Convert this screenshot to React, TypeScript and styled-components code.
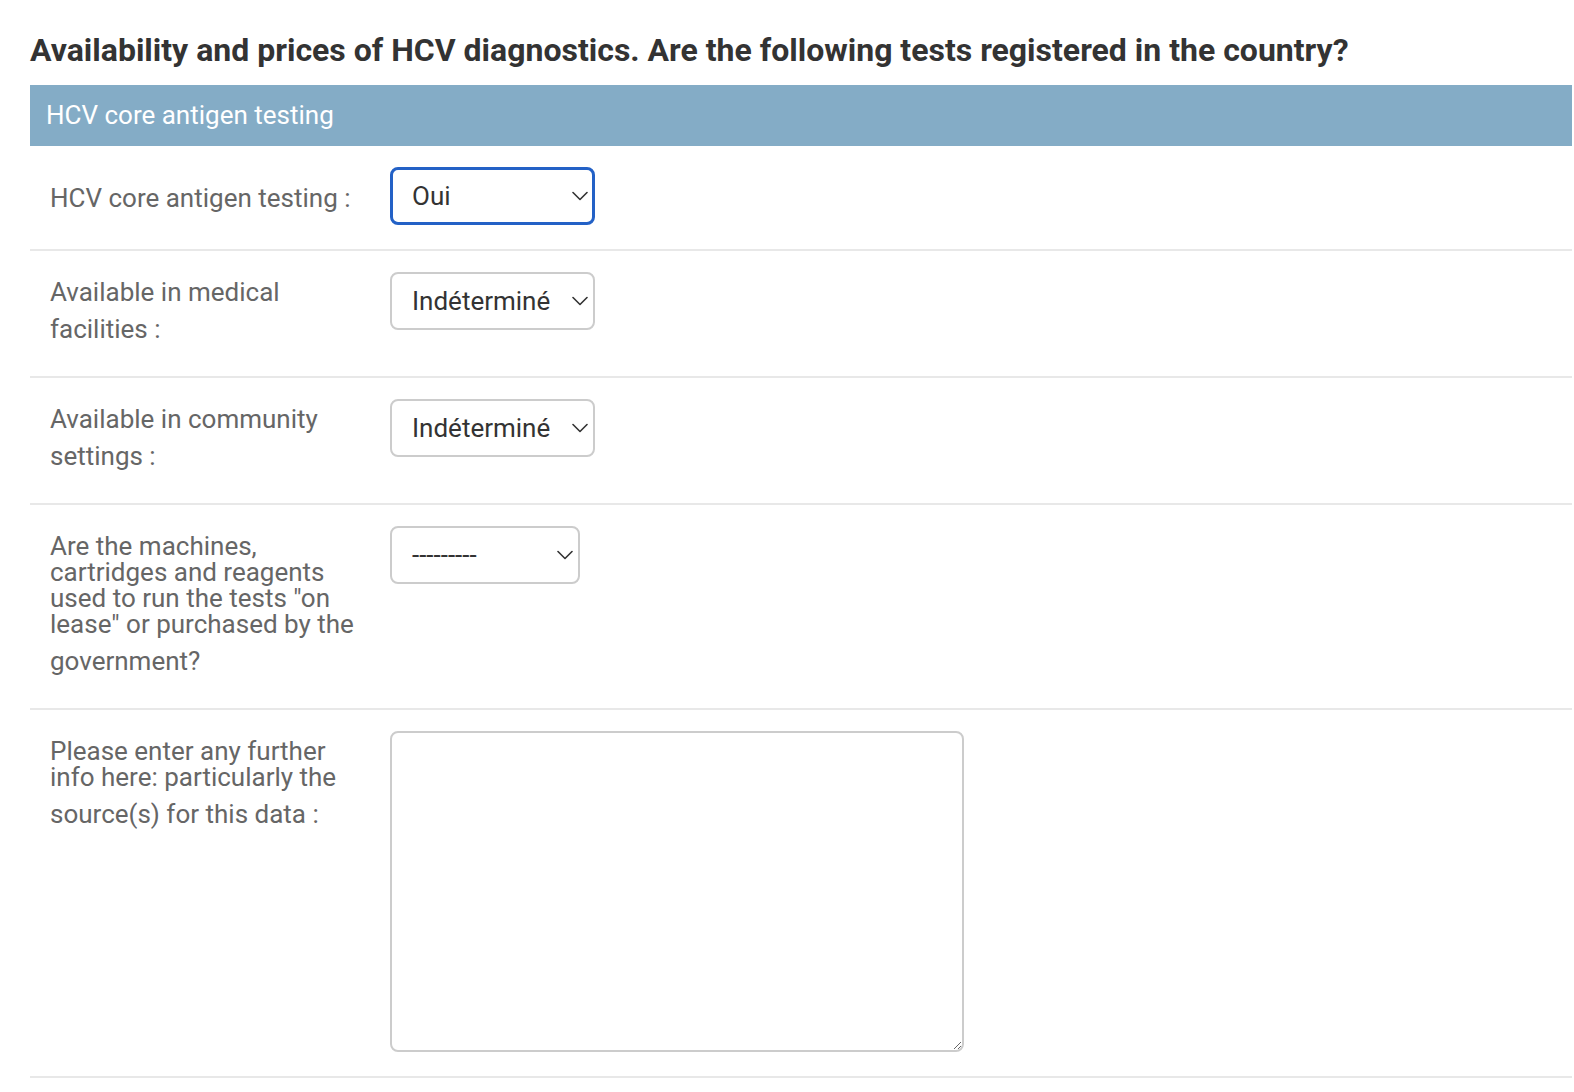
import React from "react";
import styled, { createGlobalStyle, css } from "styled-components";

const Global = createGlobalStyle`
  html, body { margin: 0; padding: 0; background: #fff; }
  body { font-family: Roboto, "Liberation Sans", sans-serif; color: #333; }
  * { box-sizing: border-box; }
`;

const Page = styled.div`
  padding: 0 2px 0 30px;
`;

const Title = styled.h1`
  margin: 0 0 15px;
  padding-top: 30px;
  font-size: 32px;
  line-height: 40px;
  font-weight: 700;
  color: #333;
`;

const Fieldset = styled.fieldset`
  margin: 0;
  padding: 0;
  border: 0;
  min-width: 0;
`;

const Legend = styled.h2`
  margin: 0;
  padding: 16px;
  font-size: 26px;
  line-height: 29px;
  font-weight: 400;
  color: #fff;
  background: #84acc6;
`;

const Row = styled.div`
  display: flex;
  align-items: flex-start;
  padding: 20px 20px 19px;
  border-bottom: 2px solid #e8e8e8;
`;

const Label = styled.label`
  flex: 0 0 340px;
  width: 340px;
  padding: 8px 20px 0 0;
  font-size: 26px;
  line-height: 26px;
  color: #666;
  word-wrap: break-word;
  &::after {
    content: "";
    display: inline-block;
    vertical-align: middle;
    height: 52px;
  }
`;

const Field = styled.div`
  padding-top: 1px;
  min-height: 64px;
`;

const SelectBox = styled.div<{ $w: number }>`
  position: relative;
  width: ${(p) => p.$w}px;
`;

const Select = styled.select<{ $focused?: boolean }>`
  appearance: none;
  -webkit-appearance: none;
  display: block;
  width: 100%;
  height: 58px;
  margin: 0;
  padding: 0 40px 0 20px;
  border: 2px solid #ccc;
  border-radius: 8px;
  background: #fff;
  font-family: Roboto, "Liberation Sans", sans-serif;
  font-size: 26px;
  color: #333;
  outline: none;
  ${(p) =>
    p.$focused &&
    css`
      border: 3px solid #2361c6;
      padding-left: 19px;
    `}
`;

const Chevron = styled.svg`
  position: absolute;
  right: 7px;
  top: 50%;
  margin-top: -5px;
  width: 16px;
  height: 10px;
  pointer-events: none;
`;

const TextArea = styled.textarea`
  display: block;
  width: 574px;
  height: 321px;
  margin: 0 0 5px;
  padding: 4px 12px;
  border: 2px solid #ccc;
  border-radius: 8px;
  font-family: Roboto, "Liberation Sans", sans-serif;
  font-size: 26px;
  color: #333;
  outline: none;
`;

const Arrow = () => (
  <Chevron viewBox="0 0 16 10">
    <path d="M1 1.5 L8 8.5 L15 1.5" fill="none" stroke="#333" strokeWidth="1.6" strokeLinecap="round" strokeLinejoin="round" />
  </Chevron>
);

const SelectField: React.FC<{ value: string; options: string[]; width: number; focused?: boolean }> = ({
  value,
  options,
  width,
  focused,
}) => (
  <Field>
    <SelectBox $w={width}>
      <Select $focused={focused} defaultValue={value}>
        {options.map((o) => (
          <option key={o} value={o}>
            {o}
          </option>
        ))}
      </Select>
      <Arrow />
    </SelectBox>
  </Field>
);

const yesNo = ["Indéterminé", "Oui", "Non"];

export default function App() {
  return (
    <>
      <Global />
      <Page>
        <Title>Availability and prices of HCV diagnostics. Are the following tests registered in the country?</Title>
        <Fieldset>
          <Legend>HCV core antigen testing</Legend>
          <Row>
            <Label>HCV core antigen testing :</Label>
            <SelectField value="Oui" options={yesNo} width={205} focused />
          </Row>
          <Row>
            <Label>Available in medical facilities :</Label>
            <SelectField value="Indéterminé" options={yesNo} width={205} />
          </Row>
          <Row>
            <Label>Available in community settings :</Label>
            <SelectField value="Indéterminé" options={yesNo} width={205} />
          </Row>
          <Row>
            <Label>Are the machines, cartridges and reagents used to run the tests "on lease" or purchased by the government?</Label>
            <SelectField value="---------" options={["---------", "On lease", "Purchased"]} width={190} />
          </Row>
          <Row>
            <Label>Please enter any further info here: particularly the source(s) for this data :</Label>
            <Field>
              <TextArea />
            </Field>
          </Row>
        </Fieldset>
      </Page>
    </>
  );
}
